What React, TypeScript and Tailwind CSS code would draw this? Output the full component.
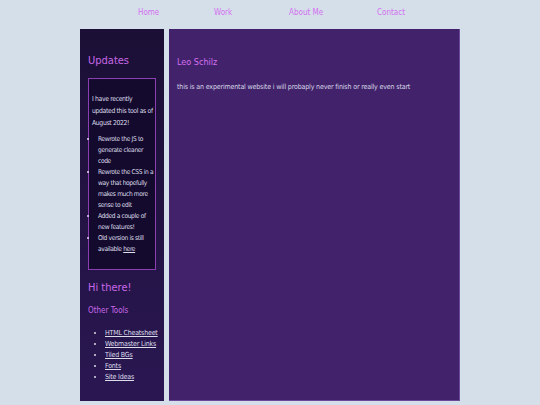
import React from 'react';

const updates: React.ReactNode[] = [
  <>Rewrote the JS to<br />generate cleaner<br />code</>,
  <>Rewrote the CSS in a<br />way that hopefully<br />makes much more<br />sense to edit</>,
  <>Added a couple of<br />new features!</>,
  <>Old version is still<br />available <a className="underline">here</a></>,
];

const tools = ['HTML Cheatsheet', 'Webmaster Links', 'Tiled BGs', 'Fonts', 'Site Ideas'];

export default function App() {
  return (
    <div
      className="min-h-[405px] bg-[#d4dfea] flex flex-col items-center"
      style={{ fontFamily: '"DejaVu Sans Condensed", sans-serif' }}
    >
      {/* nav */}
      <nav className="relative w-full h-[29px] pt-[8px] text-[8px] leading-[10px] text-[#d56ff0]">
        <a className="absolute left-[138px]">Home</a>
        <a className="absolute left-[214px]">Work</a>
        <a className="absolute left-[289px]">About Me</a>
        <a className="absolute left-[377px]">Contact</a>
      </nav>

      <div className="flex gap-[5px] h-[372px]">
        {/* sidebar */}
        <aside className="w-[84px] bg-gradient-to-b from-[#1b0f35] to-[#2a1752] px-[8px] pt-[25px]">
          <h2 className="text-[11px] text-[#c868e8] leading-[14px]">Updates</h2>
          <div className="mt-[10px] border border-[#8b3fb3] bg-[#140a2d] pl-[3px] pt-[14px] pb-[14px] whitespace-nowrap text-[#dcdcea]">
            <p className="text-[6.8px] leading-[12px] tracking-[-0.35px]">
              I have recently<br />updated this tool as of<br />August 2022!
            </p>
            <ul className="mt-[5px] list-disc pl-[6px] text-[6.6px] leading-[11px] tracking-[-0.35px]">
              {updates.map((u, i) => (
                <li key={i}>{u}</li>
              ))}
            </ul>
          </div>
          <h2 className="mt-[11px] text-[11px] text-[#c868e8] leading-[14px]">Hi there!</h2>
          <h3 className="mt-[11px] text-[8px] text-[#c868e8] leading-[10px]">Other Tools</h3>
          <ul className="mt-[11.5px] list-disc pl-[17px] text-[7px] leading-[11px] tracking-[-0.2px] whitespace-nowrap text-[#dcdcea]">
            {tools.map((t) => (
              <li key={t}>
                <a className="underline">{t}</a>
              </li>
            ))}
          </ul>
        </aside>

        {/* main */}
        <main className="w-[291px] bg-[#42236b] border-r border-b border-[#6b4a9a] px-[8px] pt-[27px]">
          <h1 className="text-[9px] text-[#d56ff0] leading-[12px]">Leo Schilz</h1>
          <p className="mt-[14px] text-[7px] leading-[10px] tracking-[-0.15px] text-[#d8d8e8]">
            this is an experimental website i will probaply never finish or really even start
          </p>
        </main>
      </div>
    </div>
  );
}
